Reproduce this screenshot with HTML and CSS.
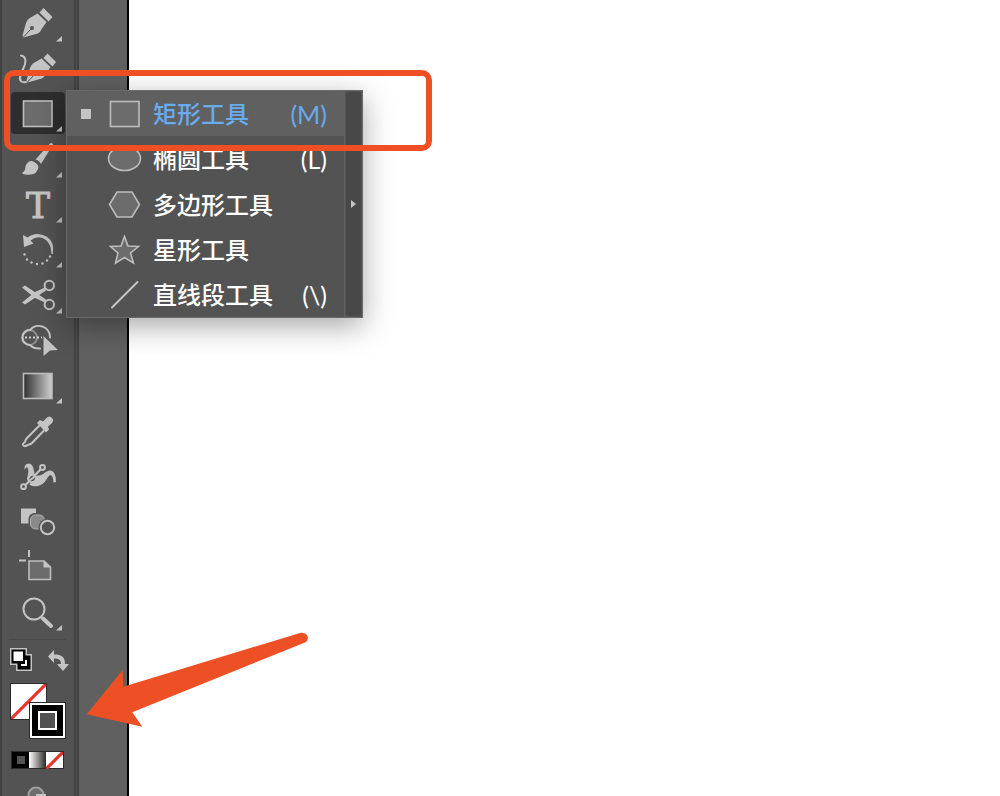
FILE: index.html
```html
<!DOCTYPE html>
<html lang="zh-CN">

<head>
    <meta charset="UTF-8">
    <meta name="viewport" content="width=device-width, initial-scale=1.0">
    <title>矩形工具</title>
    <link rel="stylesheet" href="styles.css">
</head>

<body>
    <div class="workspace">
        <nav class="toolbar">
            <div class="tools">
                <div class="group">
                    <button class="tool" aria-label="Pen">
                        <svg viewBox="11 0 54 42">
                            <path d="M43.5 6L52.5 15L48.5 19.5L39.5 10.5Z" />
                            <path d="M37.5 11.5L29 16.5Q27 18 26 21L22.5 33.5L23.5 35.5L36 32Q40 31 41 28L46.5 20Z" />
                            <path class="cut" d="M23.5 35L31.5 26.5" />
                            <circle class="hole" cx="32" cy="26" r="2" />
                            <path d="M62 34V39.5H56Z" />
                        </svg>
                    </button>
                    <button class="tool" aria-label="Curvature">
                        <svg viewBox="11 0 54 42">
                            <path d="M47.5 6.5L56 15L52.5 19.5L43.5 11Z" />
                            <path d="M41.5 11.5L33 16.5Q31 18 30 21L26.5 33.5L27.5 35.5L40 32Q44 31 45 28L50.5 20Z" />
                            <path class="cut" d="M27.5 35L35.5 26.5" />
                            <circle class="hole" cx="36" cy="26" r="2" />
                            <path class="line" d="M21 8.5C27 10 26 16 23.5 21S18 32 21.5 34.5Q23 35.5 26 35" />
                        </svg>
                    </button>
                    <button class="tool active" aria-label="Rectangle">
                        <svg viewBox="11 0 54 42">
                            <rect class="shape" x="23.5" y="9" width="28.5" height="25.5" />
                            <path d="M62 34V39.5H56Z" />
                        </svg>
                    </button>
                </div>
                <div class="group">
                    <button class="tool" aria-label="Paintbrush">
                        <svg viewBox="11 0 54 42">
                            <path d="M50 5.5Q52 4 53 6.5L41 26Q39 22 35.5 21.5Z" />
                            <path d="M22.5 34.5Q25.5 33 25.5 28Q28 22.5 32 23Q38 25 38.5 29.5Q37 36 31 36.5Q26 37 22.5 36Z" />
                            <path d="M62 34V39.5H56Z" />
                        </svg>
                    </button>
                    <button class="tool" aria-label="Type">
                        <span class="type-mark">T</span>
                        <svg viewBox="11 0 54 42">
                            <path d="M62 34V39.5H56Z" />
                        </svg>
                    </button>
                    <button class="tool" aria-label="Rotate">
                        <svg viewBox="11 0 54 42">
                            <path d="M23 7L24 19L33.5 15.5L30.5 12.5Q39 6.5 46 12Q51 16 51.5 26H52.8Q55 14 46.5 8.5Q36 3 27.5 9.5Z" />
                            <circle cx="24.5" cy="26.5" r="1.2" />
                            <circle cx="27" cy="31.5" r="1.2" />
                            <circle cx="31.5" cy="34.5" r="1.2" />
                            <circle cx="37" cy="36" r="1.2" />
                            <circle cx="42.5" cy="35.5" r="1.2" />
                            <circle cx="47" cy="32.5" r="1.2" />
                            <circle cx="50" cy="28.5" r="1.2" />
                            <path d="M62 34V39.5H56Z" />
                        </svg>
                    </button>
                </div>
                <div class="group">
                    <button class="tool" aria-label="Scissors">
                        <svg viewBox="11 0 54 42">
                            <circle class="line" cx="49.3" cy="11.5" r="4.7" />
                            <circle class="line" cx="49.3" cy="30.5" r="4.7" />
                            <path d="M22 13.5L25 11.5L46 25.5L45 28.5L35 24Z" />
                            <path d="M22 28.5L25 30.5L46 16.5L45 13.5L35 18Z" />
                            <path d="M62 34V39.5H56Z" />
                        </svg>
                    </button>
                    <button class="tool" aria-label="Shape Builder">
                        <svg viewBox="11 0 54 42">
                            <circle class="line faint" cx="29.5" cy="18.5" r="7.5" />
                            <path class="line" d="M30 11A7.5 7.5 0 1 0 30 26" />
                            <path class="line" d="M30 11A11.3 11.3 0 0 1 50 18.5M30 26Q34 30 40 29.5" />
                            <path class="dots" d="M25 18.5H42" />
                            <path d="M43.5 17L58 31L50 31.5L43.5 37Z" />
                        </svg>
                    </button>
                    <button class="tool" aria-label="Gradient">
                        <svg viewBox="11 0 54 42">
                            <defs>
                                <linearGradient id="ramp">
                                    <stop offset="0" stop-color="#303030" />
                                    <stop offset="1" stop-color="#d0d0d0" />
                                </linearGradient>
                            </defs>
                            <rect class="shape ramp" x="23.5" y="9.5" width="28.5" height="25" />
                            <path d="M62 34V39.5H56Z" />
                        </svg>
                    </button>
                </div>
                <div class="group">
                    <button class="tool" aria-label="Eyedropper">
                        <svg viewBox="11 0 54 42">
                            <path d="M37 13L40 10L43 11.5L46.5 8Q49.5 5 52 8Q54.5 10.5 51.5 13.5L48 16.5L49 19.5L46 22.5Z" />
                            <path class="line" d="M39 16L27 28Q25.5 29.5 25 32Q22 34 23.5 35.5Q25.5 37 27.5 35Q30.5 34.5 32 33L43.5 21" />
                        </svg>
                    </button>
                    <button class="tool" aria-label="Puppet Warp">
                        <svg viewBox="11 0 54 42">
                            <path d="M24.5 15Q24 8.5 28.5 8.5Q32.5 8.5 33.5 14Q34.5 21 39 20.5C44 20 46 15 51 15.5Q56 17 56 27L53.5 27.5Q53 19.5 50 20C46 23 46 29 38 31Q30 32.5 28 27C26 22 30 17 27.5 12.5Q26 11.5 24.5 15Z" />
                            <path class="cut halo" d="M25 31L41 14" />
                            <path class="line" d="M25 30.5L41 14" />
                            <circle class="line" cx="32.3" cy="23.5" r="4" />
                            <circle class="hole" cx="32.3" cy="23.5" r="2.5" />
                            <path class="line" d="M31 24.5L34 22" />
                            <circle class="line node" cx="23.5" cy="31.7" r="2.4" />
                            <circle class="line node" cx="42.5" cy="12.5" r="2.4" />
                        </svg>
                    </button>
                    <button class="tool" aria-label="Blend">
                        <svg viewBox="11 0 54 42">
                            <rect x="21" y="8.5" width="15" height="15" />
                            <rect class="gap" x="28.5" y="13" width="17.5" height="17.5" rx="6" />
                            <rect class="mid" x="30.5" y="15" width="14" height="14" rx="5" />
                            <circle class="gap" cx="47.5" cy="27.5" r="9" />
                            <circle class="line node" cx="47.5" cy="27.5" r="6.7" />
                        </svg>
                    </button>
                </div>
                <div class="group">
                    <button class="tool" aria-label="Artboard">
                        <svg viewBox="11 0 54 42">
                            <path class="line thin" d="M29 4V11M19 14.5H26" />
                            <path class="shape" d="M29 15H44L50.5 21V33.5H29Z" />
                            <path d="M43.5 14L51 21.5H43.5Z" />
                        </svg>
                    </button>
                    <button class="tool" aria-label="Zoom">
                        <svg viewBox="11 0 54 42">
                            <circle class="line" cx="34" cy="18" r="10.5" />
                            <path class="line grip" d="M43 27.5L51 35" />
                            <path d="M62 34V39.5H56Z" />
                        </svg>
                    </button>
                </div>
            </div>

            <div class="colors">
                <div class="color-actions">
                    <button class="action" aria-label="Default Fill and Stroke">
                        <svg viewBox="0 0 24 24">
                            <path d="M0 0H17V6H22V23H6V17H0Z" />
                            <path class="black" d="M1.5 1.5H15.5V7.5H20.5V21.5H7.5V15.5H1.5Z" />
                            <path class="white" d="M3.5 3.5H13V13H3.5Z" />
                            <path class="line white-line" d="M16 12V17H11" />
                        </svg>
                    </button>
                    <button class="action" aria-label="Swap Fill and Stroke">
                        <svg viewBox="0 0 24 24">
                            <path d="M1 8.5L7 2V6.5C15 6.5 18 9 18 16H22L16 23L10 16H14C14 12 12 10.5 7 10.5V15Z" />
                        </svg>
                    </button>
                </div>
                <div class="swatches">
                    <button class="swatch fill" aria-label="Fill: none">
                        <svg viewBox="0 0 34 34">
                            <path class="none" d="M0 34L34 0" />
                        </svg>
                    </button>
                    <button class="swatch stroke" aria-label="Stroke"><span class="stroke-hole"></span></button>
                </div>
                <div class="modes">
                    <button class="mode solid" aria-label="Color"><span></span></button>
                    <button class="mode blend" aria-label="Gradient"></button>
                    <button class="mode" aria-label="None">
                        <svg viewBox="0 0 16 16">
                            <path class="none" d="M0 16L16 0" />
                        </svg>
                    </button>
                </div>
                <button class="draw-mode" aria-label="Draw Normal">
                    <svg viewBox="0 0 24 24">
                        <circle class="disc" cx="12" cy="9" r="7.5" />
                        <rect x="12" y="8" width="10" height="10" />
                    </svg>
                </button>
            </div>
        </nav>
        <div class="gutter"></div>
        <main class="canvas"></main>
    </div>

    <div class="flyout">
        <div class="menu" role="menu">
            <button class="item selected" role="menuitemradio" aria-checked="true">
                <span class="marker"></span>
                <svg viewBox="0 0 36 32">
                    <rect class="shape" x="4.5" y="3.5" width="28.5" height="25" />
                </svg>
                <span class="name">矩形工具</span>
                <span class="key">(M)</span>
            </button>
            <button class="item" role="menuitemradio" aria-checked="false">
                <span class="marker"></span>
                <svg viewBox="0 0 36 32">
                    <ellipse class="shape" cx="18.5" cy="15.5" rx="16" ry="12" />
                </svg>
                <span class="name">椭圆工具</span>
                <span class="key">(L)</span>
            </button>
            <button class="item" role="menuitemradio" aria-checked="false">
                <span class="marker"></span>
                <svg viewBox="0 0 36 32">
                    <path class="shape" d="M3.5 15.5L11 3H26L33.5 15.5L26 28H11Z" />
                </svg>
                <span class="name">多边形工具</span>
            </button>
            <button class="item" role="menuitemradio" aria-checked="false">
                <span class="marker"></span>
                <svg viewBox="0 0 36 32">
                    <path class="shape" d="M18.5 2.5L22 12L32.5 12.5L24.5 19L27.5 29L18.5 23.5L9.5 29L12 19L4.5 12.5L15 12Z" />
                </svg>
                <span class="name">星形工具</span>
            </button>
            <button class="item" role="menuitemradio" aria-checked="false">
                <span class="marker"></span>
                <svg viewBox="0 0 36 32">
                    <path class="line" d="M6 28.5L31.5 3" />
                </svg>
                <span class="name">直线段工具</span>
                <span class="key">(\)</span>
            </button>
        </div>
        <button class="tearoff" aria-label="Tear off">
            <svg viewBox="0 0 6 10">
                <path d="M0 1L5 5L0 9Z" />
            </svg>
        </button>
    </div>

    <div class="callout"></div>
    <svg class="arrow" viewBox="86 630 224 100">
        <path d="M86.7 714.3L122.7 670L123.3 686.7L300 633Q305 632 307.5 636Q309 640.5 305 642.5L132.3 712.3L142.3 726.7Z" />
    </svg>
</body>

</html>
```
FILE: styles.css
```css
* {
    box-sizing: border-box;
}

body {
    margin: 0;
    height: 100vh;
    overflow: hidden;
    position: relative;
    background: #fff;
    font-family: Lato, "Noto Sans CJK SC", sans-serif;
}

button {
    padding: 0;
    border: 0;
    background: none;
    font: inherit;
    color: inherit;
    cursor: pointer;
}

svg {
    display: block;
    fill: #c4c4c4;
}

.workspace {
    display: flex;
    height: 100vh;
}

/* toolbar */
.toolbar {
    flex: none;
    width: 79px;
    padding: 2px 0 0;
    background: #535353;
    border-left: 2px solid #414141;
    border-right: 5px double #414141;
    overflow: hidden;
}

.gutter {
    flex: none;
    width: 50px;
    background: #606060;
    border-right: 2px solid #000;
}

.canvas {
    flex: 1;
    background: #fff;
}

.tools {
    display: flex;
    flex-direction: column;
    gap: 4px;
    padding-left: 9px;
}

.group {
    display: flex;
    flex-direction: column;
    gap: 3px;
}

.tool {
    position: relative;
    width: 54px;
    height: 42px;
    border-radius: 4px;
}

.tool.active {
    background: #2e2e2e;
}

.type-mark {
    position: absolute;
    inset: 0;
    font: 36px/46px "DejaVu Serif", serif;
    color: #c4c4c4;
    -webkit-text-stroke: 1px #c4c4c4;
}

/* icon parts */
.line {
    fill: none;
    stroke: #c4c4c4;
    stroke-width: 2;
    stroke-linecap: round;
}

.thin {
    stroke-linecap: butt;
}

.shape {
    fill: #6c6c6c;
    stroke: #bdbdbd;
    stroke-width: 1.6;
}

.ramp {
    fill: url(#ramp);
}

.cut {
    fill: none;
    stroke: #535353;
    stroke-width: 1;
}

.halo {
    stroke-width: 4;
}

.hole,
.gap,
.node {
    fill: #535353;
}

.mid {
    fill: #8a8a8a;
    stroke: #b0b0b0;
}

.faint {
    stroke: #8c8c8c;
}

.disc {
    fill: #6c6c6c;
    stroke: #a0a0a0;
    stroke-width: 2;
}

.dots {
    stroke: #d0d0d0;
    stroke-width: 2;
    stroke-dasharray: 2 2;
}

.grip {
    stroke-width: 4;
}

.black {
    fill: #000;
}

.white {
    fill: #fff;
}

.white-line {
    stroke: #fff;
    stroke-linecap: butt;
}

.none {
    stroke: #e8332a;
    stroke-width: 3;
}

/* fill and stroke */
.colors {
    margin: 6px 8px 0 7px;
    border-top: 1px solid #4a4a4a;
}

.color-actions {
    display: flex;
    justify-content: space-between;
    margin: 8px -5px 0 1px;
}

.action {
    width: 24px;
    height: 24px;
}

.swatches {
    position: relative;
    height: 56px;
    margin: 11px 0 0 1px;
}

.swatch {
    position: absolute;
    width: 37px;
    height: 37px;
    border: 1px solid #2b2b2b;
}

.swatch.fill {
    top: 0;
    left: 0;
    background: #fff;
}

.swatch.stroke {
    top: 19px;
    left: 19px;
    display: grid;
    place-items: center;
    background: #000;
    box-shadow: inset 0 0 0 2px #fff;
}

.stroke-hole {
    width: 19px;
    height: 19px;
    border: 2px solid #fff;
    background: #535353;
}

.modes {
    display: flex;
    width: 53px;
    margin: 12px 0 0 2px;
    border: 1px solid #2b2b2b;
    background: #fff;
}

.mode {
    flex: 1;
    height: 16px;
}

.mode.solid {
    display: grid;
    place-items: center;
    background: #000;
}

.mode.solid span {
    width: 8px;
    height: 8px;
    background: #535353;
}

.mode.blend {
    background: linear-gradient(to right, #fff, #2e2828);
}

.draw-mode {
    display: block;
    width: 24px;
    height: 24px;
    margin: 17px 0 0 15px;
}

/* flyout menu */
.flyout {
    position: absolute;
    top: 90px;
    left: 66px;
    display: flex;
    width: 297px;
    min-height: 228px;
    border: 1px solid #6a6a6a;
    background: #535353;
    box-shadow: 0 8px 28px rgba(0, 0, 0, 0.35);
}

.menu {
    flex: 1;
    display: flex;
    flex-direction: column;
    border-right: 1px solid #626262;
}

.item {
    flex: 1;
    display: flex;
    align-items: center;
    padding: 1px 17px 0 14px;
    color: #fff;
    font-size: 24px;
    line-height: 32px;
    font-weight: 500;
    text-align: left;
}

.item svg {
    width: 36px;
    height: 32px;
    margin: 0 11px 0 15px;
}

.marker {
    width: 10px;
    height: 10px;
}

.key {
    margin-left: auto;
    font-size: 25px;
    font-weight: 400;
}

.selected {
    background: #606060;
    color: #68abee;
}

.selected .marker {
    background: #c4c4c4;
}

.tearoff {
    display: grid;
    place-items: center;
    width: 15px;
    margin: 1px;
    border-radius: 3px;
    background: #484848;
}

.tearoff svg {
    width: 6px;
    height: 10px;
}

/* annotations */
.callout {
    position: absolute;
    top: 70px;
    left: 4px;
    width: 428px;
    height: 81px;
    border: 6px solid #ee5026;
    border-radius: 10px;
    pointer-events: none;
}

.arrow {
    position: absolute;
    top: 630px;
    left: 86px;
    width: 224px;
    height: 100px;
    fill: #ee5026;
    pointer-events: none;
}
```
